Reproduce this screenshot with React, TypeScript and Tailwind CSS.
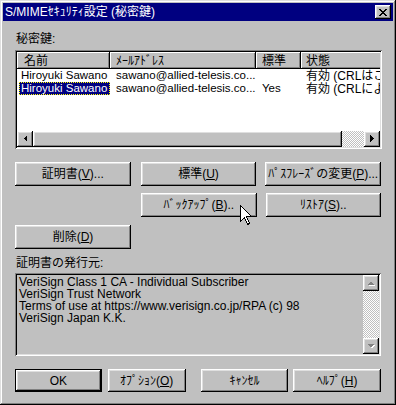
import React from "react";

const RAISED =
  "shadow-[inset_-1px_-1px_0_#000,inset_1px_1px_0_#fff,inset_-2px_-2px_0_#808080,inset_2px_2px_0_#dfdfdf]";
const SUNKEN =
  "shadow-[inset_1px_1px_0_#808080,inset_-1px_-1px_0_#fff,inset_2px_2px_0_#000,inset_-2px_-2px_0_#dfdfdf]";
const HEADER =
  "shadow-[inset_-1px_-1px_0_#000,inset_1px_1px_0_#fff,inset_-2px_-2px_0_#808080]";
const CHECKER =
  "bg-[image:repeating-conic-gradient(#fff_0_25%,#c0c0c0_0_50%)] bg-[length:2px_2px]";

function U({ children }: { children: React.ReactNode }) {
  return <span className="underline underline-offset-[1px]">{children}</span>;
}

function Btn({
  className,
  children,
  def,
}: {
  className: string;
  children: React.ReactNode;
  def?: boolean;
}) {
  if (def) {
    return (
      <div className={`${className} border border-black flex`}>
        <div className={`flex-1 bg-[#c0c0c0] ${RAISED} flex items-center justify-center whitespace-nowrap`}>
          {children}
        </div>
      </div>
    );
  }
  return (
    <div
      className={`${className} bg-[#c0c0c0] ${RAISED} flex items-center justify-center whitespace-nowrap`}
    >
      {children}
    </div>
  );
}

function Arrow({ dir, disabled }: { dir: "l" | "r" | "u" | "d"; disabled?: boolean }) {
  const pts: Record<string, string> = {
    l: "4,0 4,7 0.5,3.5",
    r: "0,0 0,7 3.5,3.5",
    u: "0,4 7,4 3.5,0.5",
    d: "0,0 7,0 3.5,3.5",
  };
  const horiz = dir === "l" || dir === "r";
  const w = horiz ? 5 : 8;
  const h = horiz ? 8 : 5;
  return (
    <div className={`w-[16px] h-[16px] shrink-0 bg-[#c0c0c0] ${RAISED} flex items-center justify-center`}>
      <svg width={w} height={h} viewBox={`0 0 ${w} ${h}`} shapeRendering="crispEdges">
        {disabled && (
          <polygon points={pts[dir]} fill="#fff" transform="translate(1,1)" />
        )}
        <polygon points={pts[dir]} fill={disabled ? "#808080" : "#000"} />
      </svg>
    </div>
  );
}

export default function App() {
  return (
    <div className="relative w-[396px] h-[405px] bg-[#c0c0c0] p-[3px] shadow-[inset_-1px_-1px_0_#000,inset_1px_1px_0_#dfdfdf,inset_-2px_-2px_0_#808080,inset_2px_2px_0_#fff] font-['Liberation_Sans','Noto_Sans_CJK_JP',sans-serif] text-[12px] text-black leading-none select-none overflow-hidden">
      {/* Title bar */}
      <div className="h-[18px] bg-[#000080] flex items-center justify-between pl-[2px] pr-[2px]">
        <span className="text-white text-[12px] leading-[18px] whitespace-nowrap">
          S/MIMEｾｷｭﾘﾃｨ設定 (秘密鍵)
        </span>
        <div className={`w-[16px] h-[14px] bg-[#c0c0c0] ${RAISED} flex items-center justify-center`}>
          <svg width="8" height="7" viewBox="0 0 8 7" shapeRendering="crispEdges">
            <path d="M0 0h2v1H0zM6 0h2v1H6zM1 1h2v1H1zM5 1h2v1H5zM2 2h4v1H2zM3 3h2v1H3zM2 4h4v1H2zM1 5h2v1H1zM5 5h2v1H5zM0 6h2v1H0zM6 6h2v1H6z" fill="#000" />
          </svg>
        </div>
      </div>

      <div className="flex flex-col px-[12px]">
        <div className="mt-[11px] h-[14px] leading-[14px] pl-[1px]">秘密鍵:</div>

        {/* List view */}
        <div className={`mt-[4px] w-[367px] h-[99px] bg-white ${SUNKEN} p-[2px] flex flex-col`}>
          <div className="h-[17px] flex overflow-hidden shrink-0 bg-[#c0c0c0] whitespace-nowrap">
            <div className={`w-[93px] shrink-0 ${HEADER} pl-[7px] flex items-center`}>名前</div>
            <div className={`w-[146px] shrink-0 ${HEADER} pl-[6px] flex items-center`}>ﾒｰﾙｱﾄﾞﾚｽ</div>
            <div className={`w-[45px] shrink-0 ${HEADER} pl-[6px] flex items-center`}>標準</div>
            <div className={`w-[120px] shrink-0 ${HEADER} pl-[5px] flex items-center`}>状態</div>
          </div>
          <div className="flex-1 overflow-hidden flex flex-col text-[11.5px]">
            <div className="h-[13px] flex items-center whitespace-nowrap">
              <div className="w-[93px] shrink-0 pl-[4px]">Hiroyuki Sawano</div>
              <div className="w-[146px] shrink-0 pl-[6px]">sawano@allied-telesis.co...</div>
              <div className="w-[45px] shrink-0 pl-[6px]"></div>
              <div className="w-[120px] shrink-0 pl-[5px] text-[12px]">有効 (CRLはこの証明書</div>
            </div>
            <div className="h-[13px] flex items-center whitespace-nowrap">
              <div className="w-[93px] shrink-0 pl-[2px] h-[13px]">
                <div className="h-[13px] w-[91px] bg-[#000080] text-white border border-dotted border-[#ffff00] pl-[1px] flex items-center">
                  Hiroyuki Sawano
                </div>
              </div>
              <div className="w-[146px] shrink-0 pl-[6px]">sawano@allied-telesis.co...</div>
              <div className="w-[45px] shrink-0 pl-[6px]">Yes</div>
              <div className="w-[120px] shrink-0 pl-[5px] text-[12px]">有効 (CRLによる確認)</div>
            </div>
          </div>
          <div className="h-[16px] flex shrink-0">
            <Arrow dir="l" />
            <div className={`w-[309px] shrink-0 bg-[#c0c0c0] ${RAISED}`}></div>
            <div className={`flex-1 ${CHECKER}`}></div>
            <Arrow dir="r" />
          </div>
        </div>

        {/* Buttons */}
        <div className="mt-[13px] flex">
          <Btn className="w-[116px] h-[24px]">
            証明書(<U>V</U>)...
          </Btn>
          <Btn className="ml-[10px] w-[116px] h-[24px]">
            標準(<U>U</U>)
          </Btn>
          <Btn className="ml-[9px] w-[116px] h-[24px]">
            ﾊﾟｽﾌﾚｰｽﾞの変更(<U>P</U>)...
          </Btn>
        </div>
        <div className="mt-[7px] flex">
          <Btn className="ml-[126px] w-[116px] h-[24px]">
            ﾊﾞｯｸｱｯﾌﾟ(<U>B</U>)..
          </Btn>
          <Btn className="ml-[9px] w-[116px] h-[24px]">
            ﾘｽﾄｱ(<U>S</U>)..
          </Btn>
        </div>
        <div className="mt-[8px] flex">
          <Btn className="w-[116px] h-[24px]">
            削除(<U>D</U>)
          </Btn>
        </div>

        <div className="mt-[7px] h-[14px] leading-[14px] pl-[1px]">証明書の発行元:</div>

        {/* Issuer text box */}
        <div className={`mt-[3px] w-[366px] h-[83px] bg-[#c0c0c0] ${SUNKEN} p-[2px] flex`}>
          <div className="flex-1 pl-[2px] pt-[1px] leading-[12px] whitespace-nowrap overflow-hidden">
            <div className="h-[12px]">VeriSign Class 1 CA - Individual Subscriber</div>
            <div className="h-[12px]">VeriSign Trust Network</div>
            <div className="h-[12px]">Terms of use at https://www.verisign.co.jp/RPA (c) 98</div>
            <div className="h-[12px]">VeriSign Japan K.K.</div>
          </div>
          <div className="w-[16px] flex flex-col">
            <Arrow dir="u" disabled />
            <div className={`flex-1 ${CHECKER}`}></div>
            <Arrow dir="d" disabled />
          </div>
        </div>

        {/* Bottom buttons */}
        <div className="mt-[13px] flex">
          <Btn def className="w-[87px] h-[23px]">OK</Btn>
          <Btn className="ml-[6px] w-[78px] h-[23px]">
            ｵﾌﾟｼｮﾝ(<U>O</U>)
          </Btn>
          <Btn className="ml-[15px] w-[88px] h-[23px]">ｷｬﾝｾﾙ</Btn>
          <Btn className="ml-[5px] w-[88px] h-[23px]">
            ﾍﾙﾌﾟ(<U>H</U>)
          </Btn>
        </div>
      </div>

      {/* Mouse cursor */}
      <svg
        className="absolute left-[240px] top-[205px]"
        width="13"
        height="21"
        viewBox="0 0 13 21"
        shapeRendering="crispEdges"
      >
        <path
          d="M0.5 0.5 L0.5 16.5 L4.5 12.5 L7.5 19.5 L9.5 18.5 L6.5 11.5 L11.5 11.5 Z"
          fill="#fff"
          stroke="#000"
          strokeWidth="1"
        />
      </svg>
    </div>
  );
}
